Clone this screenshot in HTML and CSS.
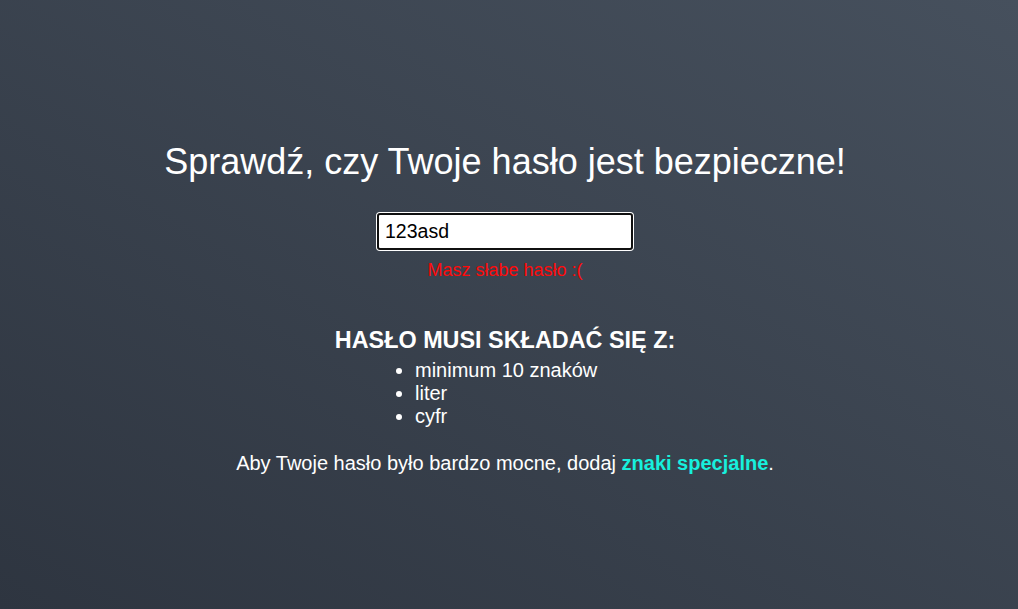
FILE: index.html
```html
<!DOCTYPE html>
<html lang="pl">
<head>
<meta charset="utf-8">
<title>Sprawdź hasło</title>
<link rel="stylesheet" href="styles.css">
</head>
<body>
<main class="page">
  <h1 class="title">Sprawdź, czy Twoje hasło jest bezpieczne!</h1>
  <input class="pass" type="text" value="123asd">
  <p class="status">Masz słabe hasło :(</p>
  <section class="rules">
    <h2 class="rules-head">HASŁO MUSI SKŁADAĆ SIĘ Z:</h2>
    <ul class="rules-list">
      <li>minimum 10 znaków</li>
      <li>liter</li>
      <li>cyfr</li>
    </ul>
  </section>
  <p class="tip">Aby Twoje hasło było bardzo mocne, dodaj <strong class="accent">znaki specjalne</strong>.</p>
</main>
</body>
</html>
```

FILE: styles.css
```css
html, body {
  margin: 0;
  height: 100%;
}
body {
  background: linear-gradient(to top right, #2e3540, #46505d);
  font-family: "Liberation Sans", Arial, sans-serif;
  color: #ffffff;
}
.page {
  box-sizing: border-box;
  display: flex;
  flex-direction: column;
  align-items: center;
  text-align: center;
  padding: 141px 8px 0 0;
}
.title {
  margin: 0;
  font-size: 36px;
  font-weight: normal;
  line-height: 42px;
}
.pass {
  margin-top: 30px;
  width: 256px;
  height: 37px;
  box-sizing: border-box;
  border: 2px solid #101010;
  border-radius: 3px;
  box-shadow: 0 0 0 1px #ffffff;
  background: #ffffff;
  padding: 0 6px;
  font-family: "Liberation Sans", Arial, sans-serif;
  font-size: 19.5px;
  color: #000000;
  outline: none;
}
.status {
  margin: 10px 0 0;
  color: #ff0a0a;
  font-size: 18px;
  line-height: 21px;
}
.rules {
  margin-top: 46px;
  display: flex;
  flex-direction: column;
  align-items: center;
}
.rules-head {
  margin: 0;
  font-size: 23.4px;
  line-height: 27px;
  font-weight: bold;
}
.rules-list {
  margin: 5px 0 0;
  padding-left: 40px;
  text-align: left;
  font-size: 20px;
  line-height: 23px;
  width: 260px;
  box-sizing: border-box;
}
.tip {
  margin: 24px 0 0;
  font-size: 20px;
  line-height: 23px;
}
.accent {
  color: #17efdd;
}
```
